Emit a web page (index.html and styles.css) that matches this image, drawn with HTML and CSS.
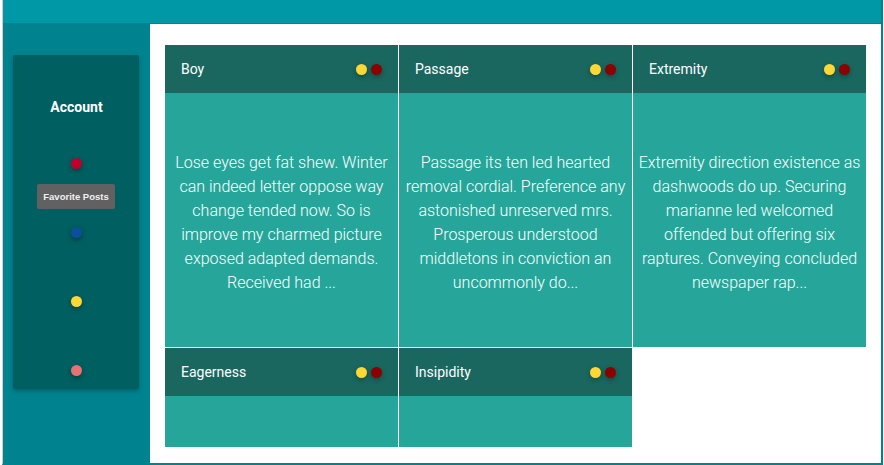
FILE: index.html
```html
<!DOCTYPE html>
<html>
<head>
<meta charset="utf-8">
<link rel="stylesheet" href="styles.css">
</head>
<body>
<div class="app">
  <div class="topbar"></div>
  <div class="content">
    <aside class="sidebar">
      <div class="side-card">
        <div class="account">Account</div>
        <div class="side-dots">
          <span class="sdot red"></span>
          <span class="sdot blue"></span>
          <span class="sdot yellow"></span>
          <span class="sdot pink"></span>
        </div>
        <div class="tooltip">Favorite Posts</div>
      </div>
    </aside>
    <main class="main">
      <div class="grid">
        <div class="card">
          <div class="card-head"><span class="title">Boy</span><span class="dots"><i class="d y"></i><i class="d r"></i></span></div>
          <div class="card-body"><p>Lose eyes get fat shew. Winter can indeed letter oppose way change tended now. So is improve my charmed picture exposed adapted demands. Received had ...</p></div>
        </div>
        <div class="card">
          <div class="card-head"><span class="title">Passage</span><span class="dots"><i class="d y"></i><i class="d r"></i></span></div>
          <div class="card-body"><p>Passage its ten led hearted removal cordial. Preference any astonished unreserved mrs. Prosperous understood middletons in conviction an uncommonly do...</p></div>
        </div>
        <div class="card">
          <div class="card-head"><span class="title">Extremity</span><span class="dots"><i class="d y"></i><i class="d r"></i></span></div>
          <div class="card-body"><p>Extremity direction existence as dashwoods do up. Securing marianne led welcomed offended but offering six raptures. Conveying concluded newspaper rap...</p></div>
        </div>
        <div class="card short">
          <div class="card-head"><span class="title">Eagerness</span><span class="dots"><i class="d y"></i><i class="d r"></i></span></div>
          <div class="card-body"></div>
        </div>
        <div class="card short">
          <div class="card-head"><span class="title">Insipidity</span><span class="dots"><i class="d y"></i><i class="d r"></i></span></div>
          <div class="card-body"></div>
        </div>
      </div>
    </main>
  </div>
</div>
</body>
</html>
```
FILE: styles.css
```css
html, body {
  margin: 0;
  padding: 0;
  background: #fff;
  font-family: Roboto, "Noto Sans", sans-serif;
}
.app {
  margin-left: 2px;
  width: 881px;
  height: 465px;
  box-sizing: border-box;
  border-left: 1px solid #cfcfcf;
  border-right: 2px solid #00838f;
  border-bottom: 2px solid #00838f;
  display: flex;
  flex-direction: column;
  overflow: hidden;
}
.topbar {
  height: 23px;
  background: #0097a7;
  border-bottom: 1px solid #00838f;
  flex: none;
}
.content {
  flex: 1;
  display: flex;
  min-height: 0;
}
.sidebar {
  width: 147px;
  flex: none;
  background: #00838f;
  padding: 31px 0 0 10px;
  box-sizing: border-box;
}
.side-card {
  position: relative;
  width: 126px;
  height: 334px;
  background: #005f60;
  border-radius: 2px;
  box-shadow: 0 2px 4px rgba(0,0,0,0.25);
  padding-top: 44px;
  box-sizing: border-box;
}
.account {
  text-align: center;
  color: #fff;
  font-weight: 700;
  font-size: 14px;
  line-height: 16px;
  padding-left: 1px;
}
.side-dots {
  margin-top: 43px;
  display: flex;
  flex-direction: column;
  align-items: center;
  gap: 58px;
}
.sdot {
  display: block;
  width: 11px;
  height: 11px;
  border-radius: 50%;
  box-shadow: 0 2px 5px rgba(0,0,0,0.35);
}
.sdot.red { background: #c0002a; }
.sdot.blue { background: #0b4f9c; }
.sdot.yellow { background: #fdd835; }
.sdot.pink { background: #e57373; }
.tooltip {
  position: absolute;
  left: 24px;
  top: 129px;
  width: 78px;
  height: 25px;
  background: #616161;
  border-radius: 2px;
  color: #f0f0f0;
  font-family: "Liberation Sans", Arial, sans-serif;
  font-size: 9.5px;
  font-weight: 600;
  line-height: 25px;
  text-align: center;
}
.main {
  flex: 1;
  background: #fff;
  padding: 21px 0 0 15px;
}
.grid {
  display: grid;
  grid-template-columns: repeat(3, 233px);
  gap: 1px;
}
.card {
  display: flex;
  flex-direction: column;
}
.card-head {
  height: 48px;
  background: #1a6760;
  display: flex;
  align-items: center;
  justify-content: space-between;
  padding: 0 16px;
}
.title {
  color: #fff;
  font-size: 14px;
}
.dots {
  display: flex;
  gap: 4px;
}
.d {
  display: block;
  width: 11px;
  height: 11px;
  border-radius: 50%;
  box-shadow: 0 2px 5px rgba(0,0,0,0.3);
}
.d.y { background: #fdd835; }
.d.r { background: #8b0000; }
.card-body {
  height: 254px;
  background: #26a69a;
  display: flex;
  align-items: center;
  justify-content: center;
  padding: 0 1px;
  box-sizing: border-box;
}
.card.short .card-body {
  height: 51px;
}
.card-body p {
  margin: 0;
  padding-top: 6px;
  text-align: center;
  color: #fff;
  font-size: 16px;
  font-weight: 300;
  line-height: 24px;
}
```
